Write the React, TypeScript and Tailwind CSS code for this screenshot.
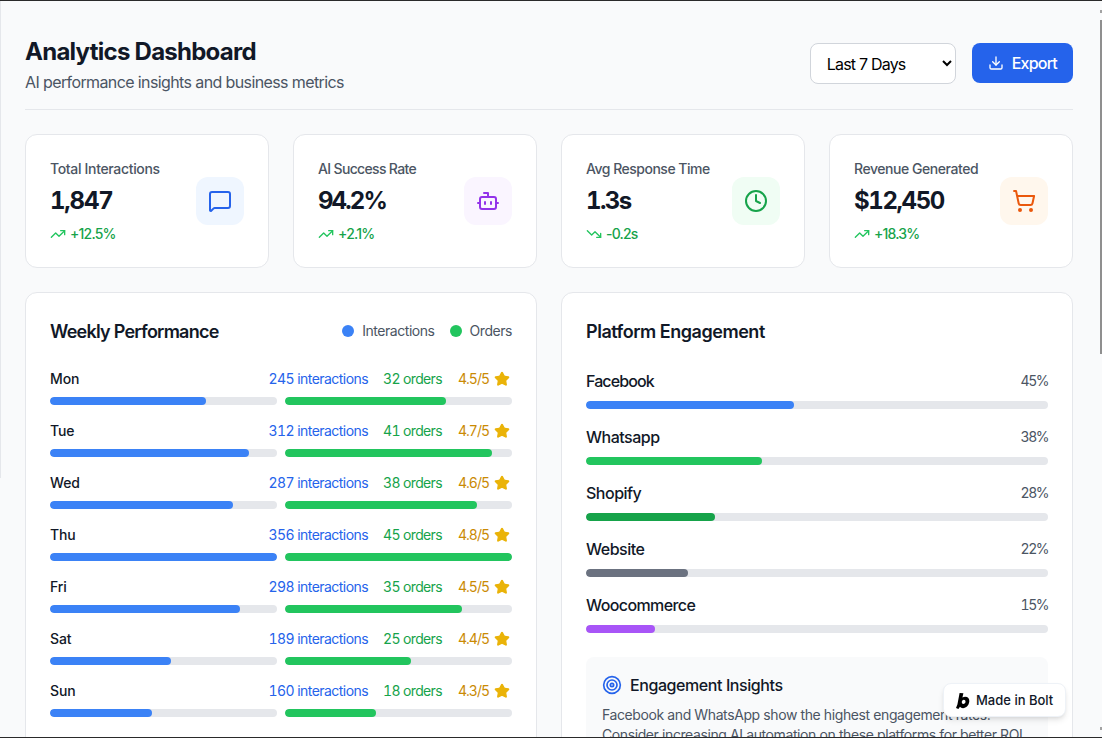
import React from 'react';
import { Bot, Clock, Download, MessageSquare, ShoppingCart, Star, Target, TrendingDown, TrendingUp } from 'lucide-react';

const stats = [
    { label: 'Total Interactions', fit: 'tracking-[-0.33px]', valueFit: 'tracking-[-1.2px]', value: '1,847', change: '+12.5%', icon: MessageSquare, box: 'bg-[#eff6ff]', color: 'text-[#2563eb]', down: false },
    { label: 'AI Success Rate', fit: 'tracking-[-0.66px]', valueFit: 'tracking-[-1.9px]', value: '94.2%', change: '+2.1%', icon: Bot, box: 'bg-[#faf5ff]', color: 'text-[#9333ea]', down: false },
    { label: 'Avg Response Time', fit: 'tracking-[-0.5px]', valueFit: 'tracking-[-1.6px]', value: '1.3s', change: '-0.2s', icon: Clock, box: 'bg-[#f0fdf4]', color: 'text-[#16a34a]', down: true },
    { label: 'Revenue Generated', fit: 'tracking-[-0.45px]', valueFit: 'tracking-[-1.4px]', value: '$12,450', change: '+18.3%', icon: ShoppingCart, box: 'bg-[#fff7ed]', color: 'text-[#ea580c]', down: false },
];

const days = [
    { day: 'Mon', interactions: 245, orders: 32, rating: '4.5' },
    { day: 'Tue', interactions: 312, orders: 41, rating: '4.7' },
    { day: 'Wed', interactions: 287, orders: 38, rating: '4.6' },
    { day: 'Thu', interactions: 356, orders: 45, rating: '4.8' },
    { day: 'Fri', interactions: 298, orders: 35, rating: '4.5' },
    { day: 'Sat', interactions: 189, orders: 25, rating: '4.4' },
    { day: 'Sun', interactions: 160, orders: 18, rating: '4.3' },
];

const platforms = [
    { name: 'Facebook', pct: 45, color: 'bg-[#3b82f6]', fit: 'tracking-[-0.9px]' },
    { name: 'Whatsapp', pct: 38, color: 'bg-[#22c55e]', fit: 'tracking-[-0.5px]' },
    { name: 'Shopify', pct: 28, color: 'bg-[#16a34a]', fit: 'tracking-[-0.5px]' },
    { name: 'Website', pct: 22, color: 'bg-[#6b7280]', fit: 'tracking-[-0.5px]' },
    { name: 'Woocommerce', pct: 15, color: 'bg-[#a855f7]', fit: 'tracking-[-0.6px]' },
];

const Bar: React.FC<{ pct: number; color: string }> = ({ pct, color }) => (
    <div className="h-2 w-full rounded-full bg-[#e5e7eb] overflow-hidden">
        <div className={`h-full rounded-full ${color}`} style={{ width: `${pct}%` }}></div>
    </div>
);

export default function App() {
    return (
        <div className="relative h-[738px] overflow-hidden bg-[#f9fafb] border-y border-[#2a2a2a] font-['Inter',sans-serif]">
            {/* window edge + scrollbar */}
            <div className="absolute left-0 top-0 w-px h-[477px] bg-[#e5e7eb]"></div>
            <div className="absolute right-0 top-[19px] w-[2px] h-[334px] bg-[#8f8f8f]"></div>
            <div className="absolute right-0 top-[9px] w-[2px] h-[3px] bg-[#a3a3a3]"></div>
            <div className="absolute right-0 top-[726px] w-[2px] h-[3px] bg-[#a3a3a3]"></div>

            <div className="pl-[25px] pr-[29px] pt-[34px]">
                {/* Header */}
                <div className="flex items-center justify-between pb-[15px] border-b border-[#e5e7eb] mb-6">
                    <div>
                        <h1 className="pt-px leading-[31px] text-2xl font-bold text-[#111827] tracking-[-0.74px]">Analytics Dashboard</h1>
                        <p className="mt-[3px] text-base text-[#4b5563] tracking-[-0.61px]">AI performance insights and business metrics</p>
                    </div>
                    <div className="flex items-center gap-4 -mt-[3px]">
                        <select className="w-[146px] h-[41px] px-3 pt-px bg-white border border-[#d1d5db] rounded-lg text-base text-black tracking-[-0.8px]">
                            <option>Last 7 Days</option>
                            <option>Last 30 Days</option>
                        </select>
                        <button className="flex items-center gap-2 h-10 px-4 bg-[#2563eb] text-white rounded-lg text-base font-medium tracking-[-0.8px] -mt-px">
                            <Download className="w-4 h-4" />
                            Export
                        </button>
                    </div>
                </div>

                {/* Stat cards */}
                <div className="grid grid-cols-4 gap-6 mb-6">
                    {stats.map((s) => (
                        <div key={s.label} className="flex items-center justify-between bg-white rounded-xl border border-[#e5e7eb] p-6">
                            <div>
                                <p className={`text-sm font-medium text-[#4b5563] ${s.fit}`}>{s.label}</p>
                                <p className={`mt-1 pt-[3px] leading-[29px] text-2xl font-bold text-[#111827] tabular-nums ${s.valueFit}`}>{s.value}</p>
                                <div className="mt-2 pt-px leading-[19px] flex items-center gap-1 text-sm font-medium text-[#16a34a] tracking-[-0.8px]">
                                    {s.down ? <TrendingDown className="w-4 h-4 text-[#22c55e]" /> : <TrendingUp className="w-4 h-4 text-[#22c55e]" />}
                                    {s.change}
                                </div>
                            </div>
                            <div className={`flex items-center justify-center w-12 h-12 rounded-xl ${s.box}`}>
                                <s.icon className={`w-6 h-6 ${s.color}`} />
                            </div>
                        </div>
                    ))}
                </div>

                <div className="grid grid-cols-2 gap-6">
                    {/* Weekly Performance */}
                    <div className="bg-white rounded-xl border border-[#e5e7eb] p-6">
                        <div className="flex items-center justify-between mb-6">
                            <h2 className="pt-[2px] leading-[26px] text-lg font-semibold text-[#111827] tracking-[-0.75px]">Weekly Performance</h2>
                            <div className="flex items-center gap-[15px] text-sm text-[#4b5563] tracking-[-0.45px]">
                                <div className="flex items-center gap-2">
                                    <div className="w-3 h-3 rounded-full bg-[#3b82f6]"></div>
                                    Interactions
                                </div>
                                <div className="flex items-center gap-2">
                                    <div className="w-3 h-3 rounded-full bg-[#22c55e]"></div>
                                    Orders
                                </div>
                            </div>
                        </div>
                        <div className="space-y-4">
                            {days.map((d) => (
                                <div key={d.day}>
                                    <div className="flex items-center justify-between mb-2 text-sm">
                                        <span className="font-medium text-[#111827] tracking-[-0.1px]">{d.day}</span>
                                        <div className="flex items-center gap-4 tabular-nums tracking-[-0.55px]">
                                            <span className="text-[#2563eb] -mr-px">{d.interactions} interactions</span>
                                            <span className="text-[#16a34a] tracking-[-0.65px]">{d.orders} orders</span>
                                            <div className="flex items-center gap-[5px] mr-[2px]">
                                                <span className="text-[#ca8a04] tracking-[-1px]">{d.rating}/5</span>
                                                <Star className="w-4 h-4 text-[#eab308] fill-[#eab308]" />
                                            </div>
                                        </div>
                                    </div>
                                    <div className="grid grid-cols-2 gap-2">
                                        <Bar pct={(d.interactions / 356) * 100} color="bg-[#3b82f6]" />
                                        <Bar pct={(d.orders / 45) * 100} color="bg-[#22c55e]" />
                                    </div>
                                </div>
                            ))}
                        </div>
                    </div>

                    {/* Platform Engagement */}
                    <div className="bg-white rounded-xl border border-[#e5e7eb] p-6">
                        <h2 className="pt-[2px] leading-[26px] text-lg font-semibold text-[#111827] tracking-[-0.47px] mb-6">Platform Engagement</h2>
                        <div className="space-y-4">
                            {platforms.map((p) => (
                                <div key={p.name}>
                                    <div className="flex items-center justify-between mb-2">
                                        <span className={`font-medium text-[#111827] ${p.fit}`}>{p.name}</span>
                                        <span className="text-sm text-[#4b5563] tabular-nums tracking-[-1.5px]">{p.pct}%</span>
                                    </div>
                                    <Bar pct={p.pct} color={p.color} />
                                </div>
                            ))}
                        </div>
                        <div className="mt-6 p-4 bg-[#f9fafb] rounded-lg">
                            <div className="flex items-center gap-2 mb-2">
                                <Target className="w-5 h-5 text-[#2563eb]" />
                                <h3 className="font-medium text-[#111827] tracking-[-0.42px]">Engagement Insights</h3>
                            </div>
                            <p className="text-sm text-[#4b5563] tracking-[-0.4px]">
                                Facebook and WhatsApp show the highest engagement rates. Consider increasing AI automation on these platforms for better ROI.
                            </p>
                        </div>
                    </div>
                </div>
            </div>

            {/* Badge */}
            <div className="absolute left-[943px] top-[682px] flex items-center gap-[6px] w-[123px] h-[34px] pl-[12px] pt-px bg-white rounded-lg border border-[#eef2f7] shadow-md text-[13px] font-medium text-[#111827]">
                <svg className="w-[14px] h-4 shrink-0" viewBox="0 0 14 16">
                    <path fillRule="evenodd" fill="#000" d="M3.6 0 L7.4 0.3 L6.4 4.6 C7.2 4 8.2 3.7 9.2 3.7 C11.9 3.7 13.6 5.6 13.3 8.6 C12.9 12.4 10.2 15.2 7 15.2 C5.6 15.2 4.6 14.7 4 13.8 L2.4 16 L0 15 L1.4 11.5 Z M7.8 6.8 C6.7 6.8 5.9 7.8 5.8 9 C5.7 10.2 6.4 11 7.4 11 C8.5 11 9.4 10.1 9.5 8.8 C9.6 7.7 8.9 6.8 7.8 6.8 Z" />
                </svg>
                Made in Bolt
            </div>
        </div>
    );
}
